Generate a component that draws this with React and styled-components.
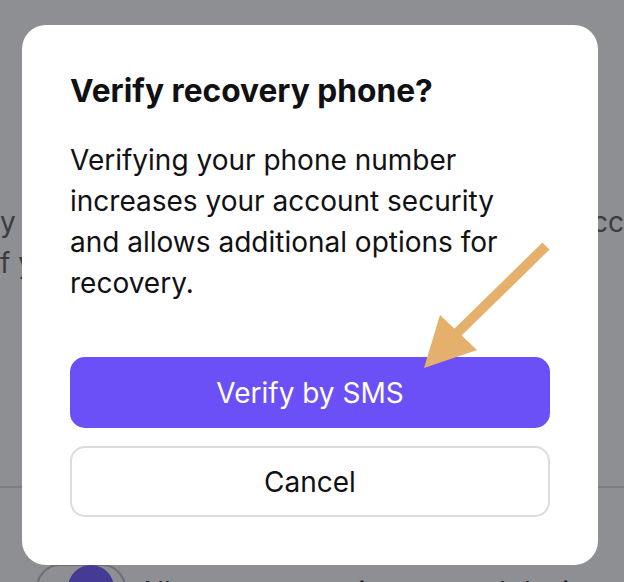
import React from 'react';
import styled, {createGlobalStyle} from 'styled-components';

const Global = createGlobalStyle`
  html, body {
    margin: 0;
    padding: 0;
    background: #8e8f93;
  }
  body {
    font-family: Inter, "Noto Sans", sans-serif;
    -webkit-font-smoothing: antialiased;
  }
`;

const Screen = styled.div`
  position: relative;
  width: 624px;
  height: 582px;
  overflow: hidden;
  background: #8e8f93;
`;

// dimmed page behind the dialog
const Behind = styled.div`
  display: flex;
  flex-direction: column;
  padding-top: 202px;
  color: #3b3c40;
  font-size: 28px;
`;

const BehindLine = styled.div`
  display: flex;
  justify-content: space-between;
  height: 41px;
  line-height: 41px;
  span:last-child {
    padding-left: 2px;
  }
`;

const Divider = styled.div`
  margin-top: 202px;
  height: 2px;
  background: #7d7e82;
`;

const ToggleRow = styled.div`
  display: flex;
  align-items: flex-start;
  gap: 12px;
  margin-top: 76px;
  padding-left: 36px;
  font-size: 28px;
  line-height: 40px;
  color: #1d1e22;
`;

const ToggleLabel = styled.span`
  padding-top: 8px;
  white-space: nowrap;
`;

const Toggle = styled.div`
  width: 90px;
  height: 48px;
  border: 2px solid #6e6f73;
  border-radius: 26px;
  display: flex;
  align-items: center;
  padding-left: 30px;
  box-sizing: border-box;
`;

const Knob = styled.div`
  width: 46px;
  height: 46px;
  border-radius: 50%;
  background: #453a94;
`;

const Dialog = styled.div`
  position: absolute;
  left: 22px;
  top: 25px;
  width: 576px;
  height: 540px;
  box-sizing: border-box;
  background: #fff;
  border-radius: 24px;
  padding: 46px 48px 0 48px;
  display: flex;
  flex-direction: column;
`;

const Title = styled.h2`
  margin: 0;
  font-size: 31.7px;
  font-weight: 700;
  line-height: 40px;
  color: #111114;
`;

const Body = styled.p`
  margin: 29px 0 0 0;
  font-size: 28px;
  line-height: 41px;
  color: #111114;
  font-weight: 400;
`;

const Actions = styled.div`
  display: flex;
  flex-direction: column;
  gap: 18px;
  margin-top: 53px;
`;

const Button = styled.button`
  height: 71px;
  width: 100%;
  border-radius: 15px;
  font-family: inherit;
  font-size: 28px;
  border: ${p => (p.$primary ? 'none' : '2px solid #dcdcdc')};
  background: ${p => (p.$primary ? '#6a50f6' : '#fff')};
  color: ${p => (p.$primary ? '#fff' : '#111114')};
  box-sizing: border-box;
`;

const Arrow = styled.svg`
  position: absolute;
  left: 0;
  top: 0;
  pointer-events: none;
`;

export default function App() {
  return (
    <Screen>
      <Global/>
      <Behind>
        <BehindLine><span>y</span><span>cc</span></BehindLine>
        <BehindLine><span>f y</span><span></span></BehindLine>
        <Divider/>
        <ToggleRow>
          <Toggle><Knob/></Toggle>
          <ToggleLabel>Allow recovery via a trusted device</ToggleLabel>
        </ToggleRow>
      </Behind>
      <Dialog>
        <Title>Verify recovery phone?</Title>
        <Body>
          Verifying your phone number increases your account security and allows additional options for recovery.
        </Body>
        <Actions>
          <Button $primary>Verify by SMS</Button>
          <Button>Cancel</Button>
        </Actions>
      </Dialog>
      <Arrow width="624" height="582" viewBox="0 0 624 582">
        <line x1="546" y1="246" x2="455" y2="335" stroke="#e4b06c" strokeWidth="10" strokeLinecap="butt"/>
        <polygon points="424,368 440,315 477,350" fill="#e4b06c"/>
      </Arrow>
    </Screen>
  );
}
